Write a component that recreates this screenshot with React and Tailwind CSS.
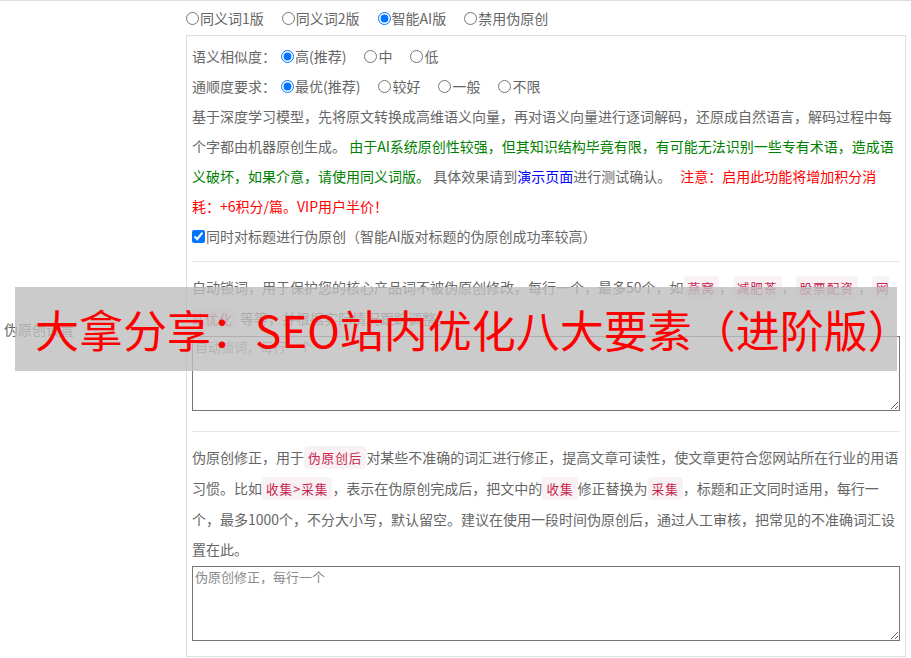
const font = "font-['Noto_Sans_CJK_SC','Noto_Sans',sans-serif]";

function Radio({ name, label, checked, first }) {
  return (
    <label className="inline-flex items-center mr-[13px]">
      <input
        type="radio"
        name={name}
        defaultChecked={checked}
        className={`${first ? 'ml-0' : 'ml-[5px]'} mr-px my-0 w-[13px] h-[13px]`}
      />
      <span>{label}</span>
    </label>
  );
}

function Code({ children }) {
  return (
    <code className={`${font} px-1 py-0.5 rounded text-[12.6px] tracking-[1px] text-[#c7254e] bg-[#f9f2f4]`}>{children}</code>
  );
}

export default function App() {
  return (
    <div className={`${font} relative bg-white text-[#666] text-[14px] h-[658px] overflow-hidden`}>
      <div className="flex border-t border-[#ddd]">
        <div className="w-[186px] shrink-0 flex items-center pl-[4px]">伪原创设置</div>
        <div className="flex-1 mr-[5px]">
          <div className="h-[34px] flex items-center">
            <Radio name="ver" label="同义词1版" first />
            <Radio name="ver" label="同义词2版" />
            <Radio name="ver" label="智能AI版" checked />
            <Radio name="ver" label="禁用伪原创" />
          </div>
          <div className="border border-[#ddd] px-[5px] pt-[5px] pb-[15px]">
            <div className="leading-[30px] flex items-center">
              <span>语义相似度：</span>
              <Radio name="sim" label="高(推荐)" checked />
              <Radio name="sim" label="中" />
              <Radio name="sim" label="低" />
            </div>
            <div className="leading-[30px] flex items-center">
              <span>通顺度要求：</span>
              <Radio name="flu" label="最优(推荐)" checked />
              <Radio name="flu" label="较好" />
              <Radio name="flu" label="一般" />
              <Radio name="flu" label="不限" />
            </div>
            <p className="leading-[30px]">
              基于深度学习模型，先将原文转换成高维语义向量，再对语义向量进行逐词解码，还原成自然语言，解码过程中每个字都由机器原创生成。{' '}
              <span className="text-[#008000]">由于AI系统原创性较强，但其知识结构毕竟有限，有可能无法识别一些专有术语，造成语义破坏，如果介意，请使用同义词版。</span>{' '}
              具体效果请到<a className="text-[#0000ff]">演示页面</a>进行测试确认。{' '}
              <span className="ml-[6px] text-[#ff0000]">注意：启用此功能将增加积分消耗：+6积分/篇。VIP用户半价！</span>
            </p>
            <label className="leading-[30px] flex items-center">
              <input type="checkbox" defaultChecked className="m-0 mr-px w-[13px] h-[13px]" />
              <span>同时对标题进行伪原创（智能AI版对标题的伪原创成功率较高）</span>
            </label>
            <hr className="mt-[10px] border-[#e5e5e5]" />
            <p className="mt-[10px] leading-[30px]">
              自动锁词，用于保护您的核心产品词不被伪原创修改，每行一个，最多50个，如<Code>燕窝</Code>，<Code>减肥茶</Code>，<Code>股票配资</Code>，<Code>网站优化</Code> 等等，并根据实际情况跟踪调整。
            </p>
            <textarea
              placeholder="自动锁词，每行一个"
              className="block w-full h-[75px] mt-[2px] border border-[#767676] px-[2px] py-px text-[13px] leading-[18px] placeholder:text-[#8a8a8a] outline-none"
            />
            <hr className="mt-[20px] border-[#e5e5e5]" />
            <p className="mt-[10px] leading-[30px]">
              伪原创修正，用于<Code>伪原创后</Code>对某些不准确的词汇进行修正，提高文章可读性，使文章更符合您网站所在行业的用语习惯。比如<Code>收集&gt;采集</Code>，表示在伪原创完成后，把文中的<Code>收集</Code>修正替换为<Code>采集</Code>，标题和正文同时适用，每行一个，最多1000个，不分大小写，默认留空。建议在使用一段时间伪原创后，通过人工审核，把常见的不准确词汇设置在此。
            </p>
            <textarea
              placeholder="伪原创修正，每行一个"
              className="block w-full h-[75px] mt-[2px] border border-[#767676] px-[2px] py-px text-[13px] leading-[18px] placeholder:text-[#8a8a8a] outline-none"
            />
          </div>
        </div>
      </div>
      <div className="absolute left-[15px] top-[287px] w-[882px] h-[84px] bg-[rgba(190,190,190,0.8)] flex items-center pl-[20px]">
        <span className="text-[44px] leading-none text-[#ff0000] whitespace-nowrap">大拿分享：SEO站内优化八大要素（进阶版）</span>
      </div>
    </div>
  );
}
